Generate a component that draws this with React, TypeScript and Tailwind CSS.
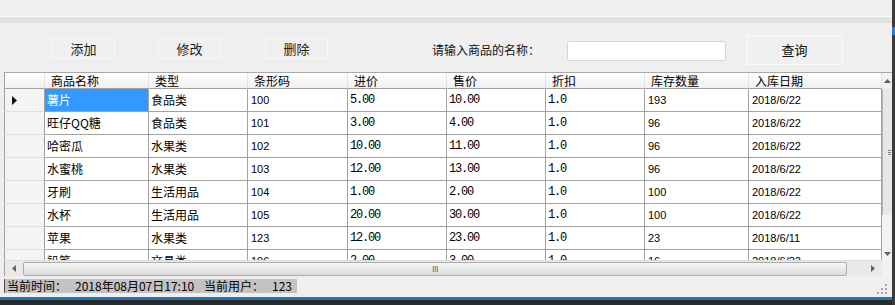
import React from "react";

const CJK = "font-['Noto_Sans_CJK_SC',sans-serif]";
const SANS = "font-['Liberation_Sans','Noto_Sans_CJK_SC',sans-serif]";
const MONO = "font-['Liberation_Mono','Noto_Sans_CJK_SC',monospace]";

type Kind = "cjk" | "sans" | "mono";

const kinds: Kind[] = ["cjk", "cjk", "sans", "mono", "mono", "mono", "sans", "sans"];
const headers = ["商品名称", "类型", "条形码", "进价", "售价", "折扣", "库存数量", "入库日期"];

const rows: string[][] = [
  ["薯片", "食品类", "100", "5.00", "10.00", "1.0", "193", "2018/6/22"],
  ["旺仔QQ糖", "食品类", "101", "3.00", "4.00", "1.0", "96", "2018/6/22"],
  ["哈密瓜", "水果类", "102", "10.00", "11.00", "1.0", "96", "2018/6/22"],
  ["水蜜桃", "水果类", "103", "12.00", "13.00", "1.0", "96", "2018/6/22"],
  ["牙刷", "生活用品", "104", "1.00", "2.00", "1.0", "100", "2018/6/22"],
  ["水杯", "生活用品", "105", "20.00", "30.00", "1.0", "100", "2018/6/22"],
  ["苹果", "水果类", "123", "12.00", "23.00", "1.0", "23", "2018/6/11"],
  ["铅笔", "文具类", "106", "2.00", "3.00", "1.0", "16", "2018/6/22"],
];

function Cell({ text, kind, selected }: { text: string; kind: Kind; selected?: boolean }) {
  const font =
    kind === "cjk"
      ? `${CJK} text-[12px] pl-[2px]`
      : kind === "mono"
      ? `${MONO} text-[12px] tracking-[-1.2px] pl-[2px]`
      : `${SANS} text-[11px] pl-[3px]`;
  return (
    <div className="h-[23px] border-r border-b border-[#a3a3a3] shadow-[inset_1px_1px_0_#e2e2e2] overflow-hidden">
      <div className={`h-full flex items-center whitespace-nowrap ${font} ${selected ? "bg-[#3399ff] text-white" : "bg-white text-black"}`}>
        {text}
      </div>
    </div>
  );
}

function ToolButton({ label }: { label: string }) {
  return (
    <button className={`mt-[15px] w-[63px] h-[21px] flex items-center justify-center bg-[#eeefee] border border-[#f9f9f9] text-[13px] text-[#222] ${CJK}`}>
      {label}
    </button>
  );
}

export default function App() {
  return (
    <div className="w-[895px] h-[305px] flex bg-[#2b2b2b] overflow-hidden">
      <div className="w-[892px] flex flex-col bg-[#eeefee]">
        {/* top strip */}
        <div className="h-[16px] bg-[#eeefee]" />
        <div className="h-px bg-[#fbfbfb]" />
        <div className="h-[6px] bg-[#e2e2e2]" />

        {/* toolbar */}
        <div className="h-[49px] flex items-start">
          <div className="ml-[52px]"><ToolButton label="添加" /></div>
          <div className="ml-[43px]"><ToolButton label="修改" /></div>
          <div className="ml-[44px]"><ToolButton label="删除" /></div>
          <div className={`ml-[104px] mt-[20px] w-[135px] text-[12px] leading-[14px] text-[#111] ${CJK}`}>请输入商品的名称：</div>
          <div className="mt-[18px] w-[159px] h-[20px] bg-white border border-[#d6d6d6] rounded-[2px]" />
          <button className={`ml-[20px] mt-[12px] w-[97px] h-[30px] flex items-center justify-center bg-[#eff0ef] border border-[#fafafa] text-[13px] text-[#111] ${CJK}`}>
            查询
          </button>
        </div>

        {/* data grid */}
        <div className="h-[204px] flex">
          <div className="w-[4px]" />
          <div className="w-[878px] flex flex-col border-t border-[#a8a8a8]">
            <div className="grid grid-cols-[41px_104px_99px_100px_99px_99px_99px_104px_133px] h-[16px]">
              <div className="border-l border-[#a0a0a0] border-b border-b-[#a0a0a0] border-r border-r-[#e2e2e2] bg-linear-to-b from-white to-[#f1f1f1]" />
              {headers.map((h) => (
                <div key={h} className={`border-r border-[#e2e2e2] border-b border-b-[#a0a0a0] bg-linear-to-b from-white to-[#f1f1f1] pl-[6px] text-[12px] leading-[15px] text-black whitespace-nowrap ${CJK}`}>
                  {h}
                </div>
              ))}
            </div>
            <div className="h-[171px] overflow-hidden">
              {rows.map((r, i) => (
                <div key={i} className="grid grid-cols-[41px_104px_99px_100px_99px_99px_99px_104px_133px]">
                  <div className="h-[23px] border-l border-[#a0a0a0] border-r border-r-[#a0a0a0] border-b border-b-[#e0e0e0] bg-[#f4f4f4] flex items-center pl-[7px]">
                    {i === 0 && (
                      <svg width="5" height="9" viewBox="0 0 5 9">
                        <polygon points="0,0 5,4.5 0,9" fill="#111" />
                      </svg>
                    )}
                  </div>
                  {r.map((c, j) => (
                    <Cell key={j} text={c} kind={kinds[j]} selected={i === 0 && j === 0} />
                  ))}
                </div>
              ))}
            </div>
            {/* horizontal scrollbar */}
            <div className="h-[16px] flex bg-[#e9e9e9] border-t border-[#dcdcdc]">
              <div className="w-[19px] flex items-center justify-center border-l border-[#a0a0a0]">
                <svg width="4" height="7" viewBox="0 0 4 7"><polygon points="4,0 0,3.5 4,7" fill="#606060" /></svg>
              </div>
              <div className="w-[824px] h-[14px] mt-px rounded-[2px] border border-[#acacac] bg-linear-to-b from-[#f7f7f7] to-[#dadada] flex items-center justify-center">
                <span className={`text-[9px] leading-[9px] text-[#707070] tracking-[-0.5px] ${SANS}`}>III</span>
              </div>
              <div className="w-[17px]" />
              <div className="w-[18px] flex items-center justify-center">
                <svg width="4" height="7" viewBox="0 0 4 7"><polygon points="0,0 4,3.5 0,7" fill="#606060" /></svg>
              </div>
            </div>
          </div>
          {/* vertical scrollbar (cut off at window edge) */}
          <div className="w-[10px] flex flex-col">
            <div className="h-[17px] bg-[#f0f0f0] flex items-center justify-center border-t border-[#a8a8a8]">
              <svg width="7" height="4" viewBox="0 0 7 4"><polygon points="0,4 3.5,0 7,4" fill="#606060" /></svg>
            </div>
            <div className="h-[126px] bg-[#e7e7e7] border-l border-[#b4b4b4] flex items-center justify-end pr-px">
              <div className="flex flex-col gap-px">
                <div className="w-[3px] h-px bg-[#808080]" />
                <div className="w-[3px] h-px bg-[#808080]" />
                <div className="w-[3px] h-px bg-[#808080]" />
              </div>
            </div>
            <div className="h-[32px] bg-[#f3f3f3]" />
            <div className="h-[13px] bg-[#f3f3f3] flex items-center justify-center">
              <svg width="7" height="4" viewBox="0 0 7 4"><polygon points="0,0 7,0 3.5,4" fill="#606060" /></svg>
            </div>
            <div className="h-[16px] bg-[#f0f0f0]" />
          </div>
        </div>

        {/* status bar */}
        <div className="h-[21px] bg-[#f0eeee] flex items-start relative">
          <div className={`ml-[4px] mt-[3px] w-[293px] h-[14px] bg-[#c3c3c3] border-l border-[#505050] flex items-center text-[12px] leading-[14px] text-black whitespace-nowrap ${CJK}`}>
            <span className="pl-[2px] w-[70px]">当前时间：</span>
            <span className="w-[129px]">2018年08月07日17:10</span>
            <span className="w-[68px]">当前用户：</span>
            <span>123</span>
          </div>
          <svg className="absolute right-[4px] bottom-[2px]" width="12" height="12" viewBox="0 0 12 12">
            <rect x="9" y="1" width="2" height="2" fill="#a8a8a8" />
            <rect x="5" y="5" width="2" height="2" fill="#a8a8a8" />
            <rect x="9" y="5" width="2" height="2" fill="#a8a8a8" />
            <rect x="1" y="9" width="2" height="2" fill="#a8a8a8" />
            <rect x="5" y="9" width="2" height="2" fill="#a8a8a8" />
            <rect x="9" y="9" width="2" height="2" fill="#a8a8a8" />
          </svg>
        </div>
        <div className="h-[3px] bg-[#1c78b9]" />
        <div className="h-[5px] bg-[#2b2b2b]" />
      </div>
      <div className="w-[3px] flex flex-col">
        <div className="h-[27px] bg-[#3a3a3a]" />
        <div className="h-[8px] bg-[#2f7fd0]" />
        <div className="flex-1 bg-[#3a3a3a]" />
      </div>
    </div>
  );
}
